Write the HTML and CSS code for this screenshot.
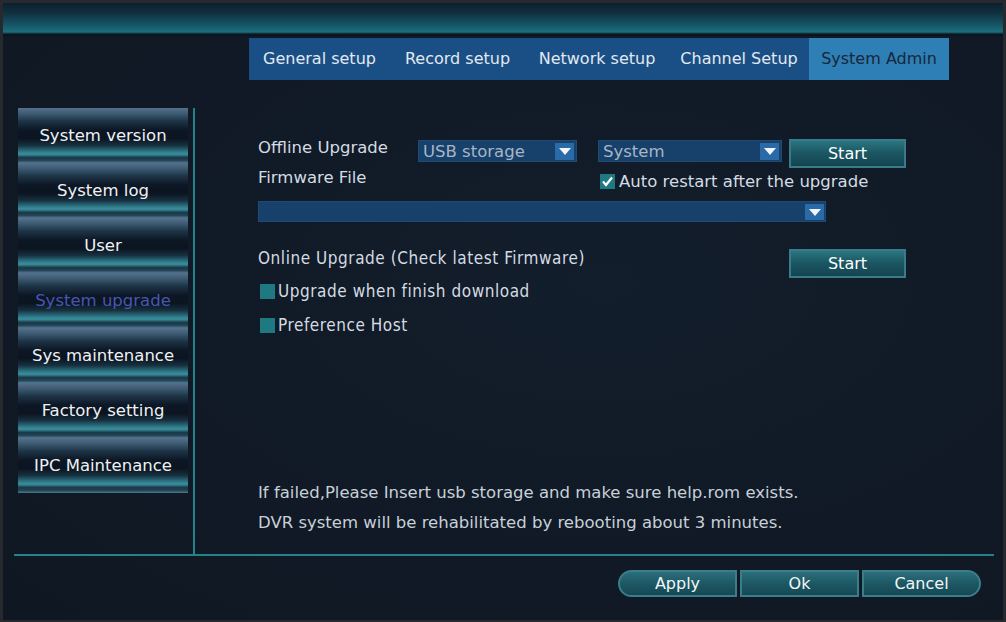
FILE: index.html
```html
<!DOCTYPE html>
<html>
<head>
<meta charset="utf-8">
<link rel="stylesheet" href="styles.css">
</head>
<body>
<div class="screen">
  <div class="titlebar"></div>
  <nav class="tabs">
    <div class="tab t1">General setup</div>
    <div class="tab t2">Record setup</div>
    <div class="tab t3">Network setup</div>
    <div class="tab t4">Channel Setup</div>
    <div class="tab t5 active">System Admin</div>
  </nav>
  <div class="body">
    <aside class="sidebar">
      <div class="item">System version</div>
      <div class="item">System log</div>
      <div class="item">User</div>
      <div class="item selected">System upgrade</div>
      <div class="item">Sys maintenance</div>
      <div class="item">Factory setting</div>
      <div class="item">IPC Maintenance</div>
    </aside>
    <section class="content">
      <div class="row r1">
        <div class="label l1">Offline Upgrade</div>
        <div class="select s-usb"><span>USB storage</span><i class="arrow"></i></div>
        <div class="select s-sys"><span>System</span><i class="arrow"></i></div>
        <button class="btn">Start</button>
      </div>
      <div class="row r2">
        <div class="label l2">Firmware File</div>
        <div class="check on"><svg viewBox="0 0 15 15" width="15" height="15"><path d="M3 7.5 L6 11 L12 3.5" fill="none" stroke="#ffffff" stroke-width="2.2"/></svg></div>
        <span class="ctext">Auto restart after the upgrade</span>
      </div>
      <div class="row r3">
        <div class="select s-file"><span></span><i class="arrow"></i></div>
      </div>
      <div class="row r4">
        <div class="label l4 cond">Online Upgrade (Check latest Firmware)</div>
        <button class="btn">Start</button>
      </div>
      <div class="row r5">
        <div class="check"></div>
        <span class="ctext cond">Upgrade when finish download</span>
      </div>
      <div class="row r6">
        <div class="check"></div>
        <span class="ctext cond">Preference Host</span>
      </div>
      <div class="notes">
        <p>If failed,Please Insert usb storage and make sure help.rom exists.</p>
        <p>DVR system will be rehabilitated by rebooting about 3 minutes.</p>
      </div>
    </section>
  </div>
  <div class="hline"></div>
  <footer class="footer">
    <div class="btngroup">
      <button class="fbtn first">Apply</button>
      <button class="fbtn">Ok</button>
      <button class="fbtn last">Cancel</button>
    </div>
  </footer>
</div>
</body>
</html>
```
FILE: styles.css
```css
* { box-sizing: border-box; }
html, body {
  margin: 0;
  padding: 0;
  width: 1006px;
  height: 622px;
  overflow: hidden;
  background: #262a2e;
  font-family: "DejaVu Sans", Verdana, sans-serif;
  font-size: 16.5px;
  color: #d4dbe2;
}
.screen {
  width: 1000px;
  height: 617px;
  margin: 3px 3px 0 3px;
  background: radial-gradient(ellipse at 60% 45%, #131e2c 0%, #101925 60%, #0f1822 100%);
  display: flex;
  flex-direction: column;
}
.titlebar {
  height: 33px;
  background: linear-gradient(#0e1f2d 0%, #10303f 30%, #16596a 70%, #1b6f7c 88%, #0c1a24 94%, #0a1119 100%);
  flex: none;
}
.tabs {
  display: flex;
  margin: 2px 0 0 246px;
  height: 42px;
  width: 700px;
  background: #1a4f86;
  flex: none;
  font-size: 16px;
}
.tab {
  height: 42px;
  line-height: 42px;
  text-align: center;
  color: #e2e9f0;
  white-space: nowrap;
}
.t1 { width: 141px; }
.t2 { width: 135px; }
.t3 { width: 144px; }
.t4 { width: 140px; }
.t5 { width: 140px; }
.tab.active { background: #2d7fb5; color: #182739; }

.body {
  display: flex;
  margin: 28px 0 0 15px;
  height: 446px;
  flex: none;
}
.sidebar {
  width: 170px;
  display: flex;
  flex-direction: column;
  align-self: flex-start;
}
.item {
  height: 55px;
  line-height: 56px;
  text-align: center;
  color: #eef2f6;
  white-space: nowrap;
  background: linear-gradient(
    #58708e 0%,
    #3d5b72 10%,
    #1d3446 24%,
    #0d1725 40%,
    #0b1420 55%,
    #17303f 68%,
    #2f7d8c 80%,
    #3a8f9c 84%,
    #1b3a48 90%,
    #243f55 95%,
    #4a7d8e 100%);
}
.item.selected { color: #4756b3; }
.content {
  margin-left: 5px;
  border-left: 2px solid #23838a;
  flex: 1;
  padding: 31px 0 0 63px;
  display: flex;
  flex-direction: column;
}
.row {
  display: flex;
  align-items: center;
}
.label { white-space: nowrap; color: #d4dbe2; }
.r1 { height: 29px; align-items: flex-start; }
.l1 { width: 160px; line-height: 18px; }
.select {
  height: 22px;
  background: #17406a;
  border: 1px solid #1f4a73;
  display: flex;
  align-items: center;
  justify-content: space-between;
  color: #a7b6c5;
  padding-left: 4px;
  margin-top: 1px;
}
.s-usb { width: 159px; }
.s-sys { width: 184px; margin-left: 21px; }
.arrow {
  width: 19px;
  height: 17px;
  margin-right: 2px;
  background: #2a6aa6;
  position: relative;
}
.arrow::after {
  content: "";
  position: absolute;
  left: 4px;
  top: 5px;
  border-left: 6px solid transparent;
  border-right: 6px solid transparent;
  border-top: 7px solid #f2f6fa;
}
.btn {
  width: 117px;
  height: 29px;
  margin-left: 7px;
  background: linear-gradient(#2a7680 0%, #1b5864 45%, #134450 100%);
  border: 2px solid #3b7a88;
  color: #ffffff;
  font-family: "DejaVu Sans", Verdana, sans-serif;
  font-size: 16px;
  padding: 0;
}
.r2 { margin-top: 5px; height: 16px; }
.l2 { width: 342px; margin-top: -8px; }
.check {
  width: 15px;
  height: 15px;
  background: #1e7a80;
  flex: none;
}
.check svg { display: block; }
.ctext { margin-left: 4px; white-space: nowrap; }
.r2 .ctext { margin-left: 4px; }
.r3 { margin-top: 12px; }
.s-file { width: 568px; height: 21px; margin-top: 0; }
.s-file .arrow { height: 16px; margin-right: 1px; }
.r4 { margin-top: 27px; align-items: flex-start; height: 29px; }
.l4 { width: 524px; line-height: 18px; }
.r4 .btn { margin-left: 7px; }
.cond {
  font-family: "DejaVu Sans Condensed", "DejaVu Sans", sans-serif;
  font-stretch: condensed;
  font-size: 17px;
  letter-spacing: 0.55px;
}
.r5 { margin-top: 3px; padding-left: 2px; }
.r6 { margin-top: 14px; padding-left: 2px; }
.r5 .ctext, .r6 .ctext { margin-left: 3px; }
.notes { margin-top: auto; margin-bottom: 16px; }
.notes p {
  margin: 0;
  line-height: 30px;
  font-size: 16.5px;
  color: #c8d0d8;
  white-space: nowrap;
}
.hline {
  margin-left: 11px;
  width: 980px;
  height: 2px;
  background: #23838a;
  flex: none;
}
.footer {
  display: flex;
  justify-content: flex-end;
  padding-right: 22px;
  margin-top: 14px;
}
.btngroup { display: flex; gap: 3px; }
.fbtn {
  width: 119px;
  height: 27px;
  background: linear-gradient(#2a6f7b 0%, #1d5864 50%, #154854 100%);
  border: 2px solid #3a7e89;
  color: #f2f6f8;
  font-family: "DejaVu Sans", Verdana, sans-serif;
  font-size: 16px;
  padding: 0;
}
.fbtn.first { border-radius: 14px 0 0 14px; }
.fbtn.last { border-radius: 0 14px 14px 0; }
```
